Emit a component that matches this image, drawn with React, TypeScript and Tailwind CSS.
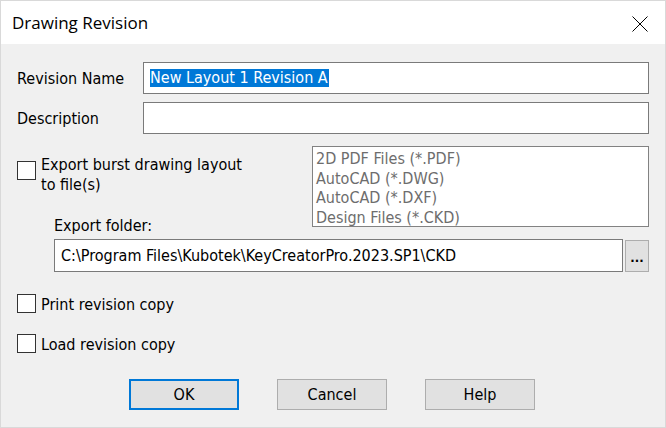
import React from 'react'

const ui = { fontFamily: '"DejaVu Sans Condensed", Tahoma, "Liberation Sans", sans-serif' }
const title = { fontFamily: '"Open Sans", "Noto Sans", "Segoe UI", sans-serif' }

function Check({ label, multi }: { label: React.ReactNode; multi?: boolean }) {
  return (
    <div className="flex items-start">
      <div className="w-[19px] h-[19px] shrink-0 border border-[#333] bg-white" />
      <div className={multi ? 'ml-[5px] -mt-[6px] leading-[20px]' : 'ml-[5px] mt-[1px] -mb-[1px] leading-[19px]'}>{label}</div>
    </div>
  )
}

function Btn({ children, primary }: { children: React.ReactNode; primary?: boolean }) {
  return (
    <button
      className={
        primary
          ? 'w-[110px] h-[31px] bg-[#e1e1e1] border-2 border-[#0078d7] text-[16px] text-black'
          : 'w-[110px] h-[31px] bg-[#e1e1e1] border border-[#adadad] text-[16px] text-black'
      }
      style={ui}
    >
      {children}
    </button>
  )
}

const fileTypes = ['2D PDF Files (*.PDF)', 'AutoCAD (*.DWG)', 'AutoCAD (*.DXF)', 'Design Files (*.CKD)']

export default function App() {
  return (
    <div className="w-[666px] h-[428px] border border-[#d9d9d9] bg-[#f0f0f0] flex flex-col text-[16px] leading-[20px] text-black" style={ui}>
      <div className="h-[43px] bg-white flex items-center justify-between pl-[11px] pr-[17px]">
        <span className="text-[17px] text-black" style={title}>Drawing Revision</span>
        <svg width="16" height="16" viewBox="0 0 16 16" className="mt-[2px]">
          <path d="M0.5 0.5 L15.5 15.5 M15.5 0.5 L0.5 15.5" stroke="#000" strokeWidth="1" fill="none" />
        </svg>
      </div>

      <div className="flex-1 px-[16px] pt-[18px]">
        <div className="flex items-center h-[32px]">
          <span className="w-[126px] mt-[2px]">Revision Name</span>
          <div className="flex-1 h-[32px] border border-[#7a7a7a] bg-white flex items-center pl-[6px]">
            <span className="bg-[#0078d7] text-white leading-[18px] pr-[1px]">New Layout 1 Revision A</span>
          </div>
        </div>
        <div className="flex items-center h-[32px] mt-[8px]">
          <span className="w-[126px] mt-[2px]">Description</span>
          <div className="flex-1 h-[32px] border border-[#7a7a7a] bg-white" />
        </div>

        <div className="flex mt-[12px]">
          <div className="flex-1 pt-[15px]">
            <Check multi label={<>Export burst drawing layout<br />to file(s)</>} />
          </div>
          <div className="w-[337px] h-[81px] border border-[#828282] bg-white pl-[3px] pt-[2px] text-[#6d6d6d] leading-[19.5px]">
            {fileTypes.map(t => (
              <div key={t}>{t}</div>
            ))}
          </div>
        </div>

        <div className="pl-[37px] -mt-[11px]">Export folder:</div>
        <div className="flex items-center pl-[37px] mt-[3px]">
          <div className="flex-1 h-[33px] border border-[#7a7a7a] bg-white flex items-center pl-[6px]">
            C:\Program Files\Kubotek\KeyCreatorPro.2023.SP1\CKD
          </div>
          <div className="w-[24px] h-[32px] ml-[2px] border border-[#adadad] bg-[#e1e1e1] flex items-end justify-center pb-[7px] leading-none text-[13px] font-bold">
            ...
          </div>
        </div>

        <div className="mt-[22px]">
          <Check label="Print revision copy" />
        </div>
        <div className="mt-[21px]">
          <Check label="Load revision copy" />
        </div>

        <div className="flex pl-[112px] gap-[38px] mt-[26px]">
          <Btn primary>OK</Btn>
          <Btn>Cancel</Btn>
          <Btn>Help</Btn>
        </div>
      </div>
    </div>
  )
}
